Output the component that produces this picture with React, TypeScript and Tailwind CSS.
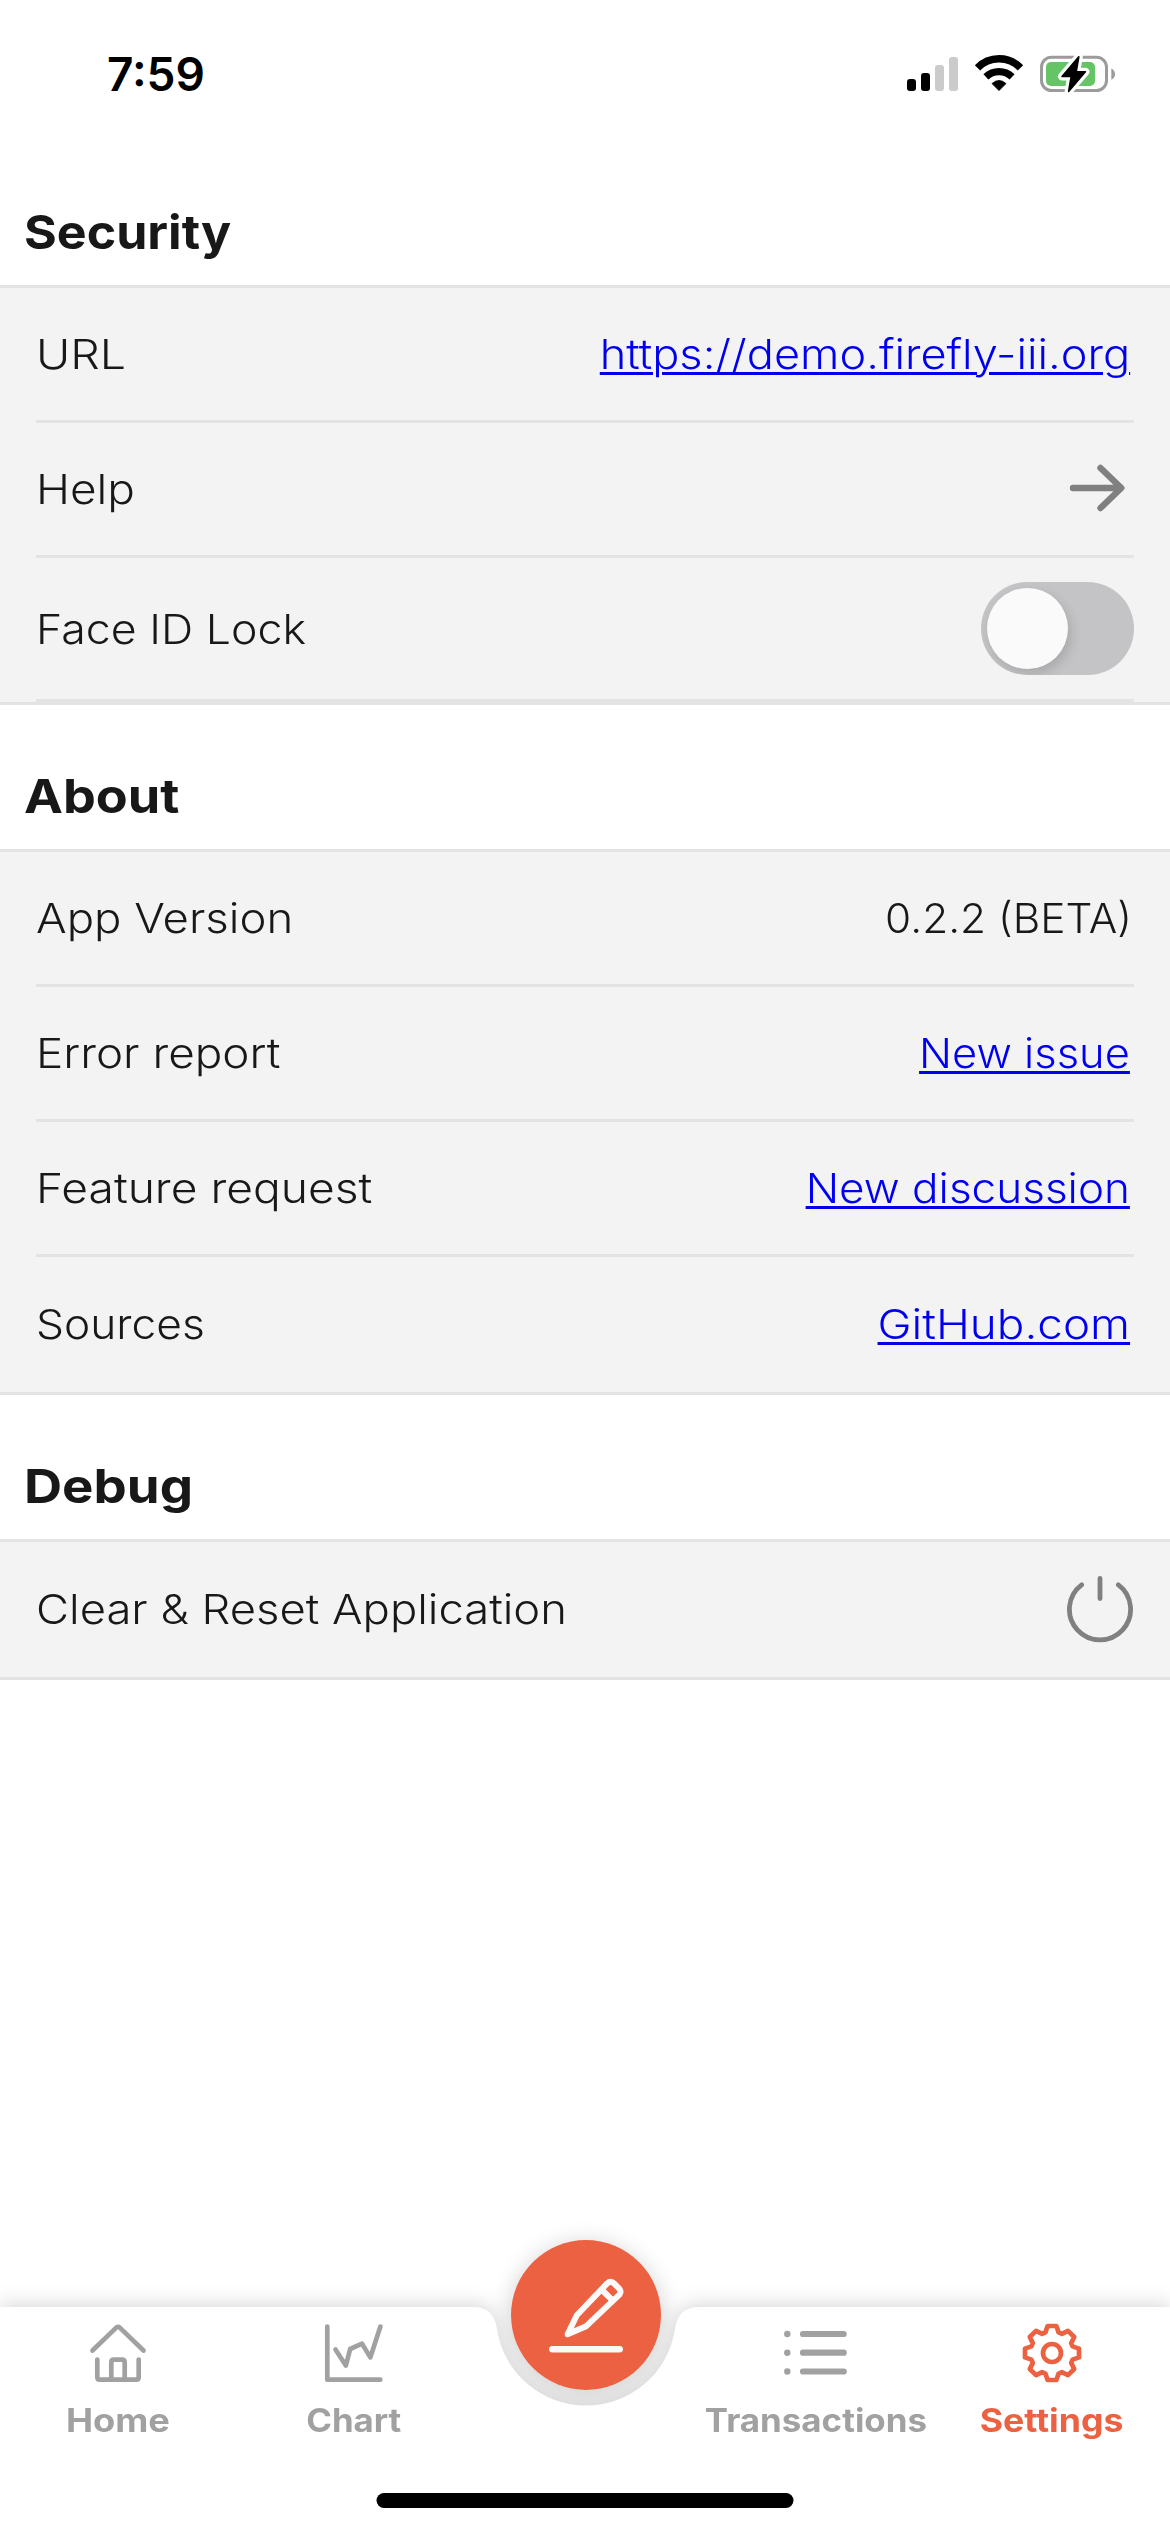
import type { ReactNode } from 'react';

function SignalIcon() {
  return (
    <svg width="51" height="60" viewBox="0 -1 51 60" aria-hidden="true">
      <rect x="0" y="34" width="9" height="12" rx="3" fill="#000" />
      <rect x="14" y="28" width="9" height="18" rx="3" fill="#000" />
      <rect x="28" y="20" width="9" height="26" rx="3" fill="#cbcbcb" />
      <rect x="42" y="12" width="9" height="34" rx="3" fill="#cbcbcb" />
    </svg>
  );
}

function WifiIcon() {
  return (
    <svg width="50" height="60" viewBox="0 -1 50 60" aria-hidden="true">
      <path d="M3.5 22.9A30 30 0 0 1 46.5 22.9" fill="none" stroke="#000" strokeWidth="7.4" />
      <path d="M11.9 31.8A19 19 0 0 1 38.1 31.8" fill="none" stroke="#000" strokeWidth="7.2" />
      <path d="M18 38.6Q25 32.2 32 38.6L25 45.6Z" fill="#000" stroke="#000" strokeWidth="0.8" strokeLinejoin="round" />
    </svg>
  );
}

function BatteryIcon() {
  const bolt = 'M38.8 11.8L22 31.4H31.2L28.6 46.4L45.4 26.8H36.2Z';
  return (
    <svg width="76" height="60" viewBox="0 -1 76 60" aria-hidden="true">
      <rect x="1.5" y="12.2" width="65" height="33.3" rx="10" fill="none" stroke="#9b9b9b" strokeWidth="3" />
      <path d="M71.3 23.5Q75 25.5 75 29.2Q75 32.8 71.3 34.8Z" fill="#9b9b9b" />
      <rect x="6" y="17" width="49" height="24" rx="5" fill="#65c466" />
      <path d={bolt} fill="#fff" stroke="#fff" strokeWidth="8" strokeLinejoin="round" />
      <path d={bolt} fill="#000" stroke="#000" strokeWidth="1.6" strokeLinejoin="round" />
    </svg>
  );
}

function ArrowIcon() {
  return (
    <svg width="68" height="60" viewBox="0 1 68 60" fill="none" stroke="#808080" strokeWidth="6.4" strokeLinecap="round" strokeLinejoin="round" aria-hidden="true">
      <path d="M7 30H55M34.5 10L55.3 30L34.5 50" />
    </svg>
  );
}

function PowerIcon() {
  return (
    <svg width="68" height="68" viewBox="0 0 68 68" fill="none" stroke="#808080" strokeWidth="4.8" strokeLinecap="round" aria-hidden="true">
      <path d="M15.6 9.8A30.6 30.6 0 1 0 52.4 9.8" />
      <path d="M34 3.5V23.5" />
    </svg>
  );
}

function HomeIcon() {
  return (
    <svg width="60" height="60" viewBox="88 2323 60 60" fill="none" stroke="#a1a1a1" strokeWidth="4.7" strokeLinecap="round" strokeLinejoin="round" aria-hidden="true">
      <path d="M92.5 2350.5L116.5 2327.4Q118 2326.2 119.5 2327.4L143.5 2350.5" />
      <path d="M97.3 2359.5V2377.2Q97.3 2379.7 99.8 2379.7H136.2Q138.7 2379.7 138.7 2377.2V2359.5" />
      <path d="M111.3 2379.7V2362.4Q111.3 2359.7 114 2359.7H122Q124.7 2359.7 124.7 2362.4V2379.7" />
    </svg>
  );
}

function ChartIcon() {
  return (
    <svg width="60" height="60" viewBox="324 2323 60 60" fill="none" stroke="#a1a1a1" strokeWidth="4.7" strokeLinecap="round" strokeLinejoin="round" aria-hidden="true">
      <path d="M327.3 2326.5V2379.7H380.3" />
      <path d="M335.5 2349.5L345.8 2365.6L350.2 2349L362 2343.6L370.3 2357.4L380.4 2326.6" />
    </svg>
  );
}

function ListIcon() {
  return (
    <svg width="72" height="60" viewBox="780 2323 72 60" fill="#a1a1a1" stroke="#a1a1a1" strokeLinecap="round" aria-hidden="true">
      <path d="M803 2334H843.7M803 2352.7H843.7M803 2371.5H843.7" strokeWidth="6.2" />
      <circle cx="787.3" cy="2334" r="3.2" stroke="none" />
      <circle cx="787.3" cy="2352.7" r="3.2" stroke="none" />
      <circle cx="787.3" cy="2371.5" r="3.2" stroke="none" />
    </svg>
  );
}

const gearTooth = [[-6.6, -20.6], [-4.4, -27], [4.4, -27], [6.6, -20.6]];
const gearPoints = Array.from({ length: 8 }, (_, i) => {
  const a = (i * Math.PI) / 4;
  return gearTooth
    .map(([x, y]) => `${(x * Math.cos(a) - y * Math.sin(a)).toFixed(2)},${(x * Math.sin(a) + y * Math.cos(a)).toFixed(2)}`)
    .join(' ');
}).join(' ');

function GearIcon() {
  return (
    <svg width="60" height="60" viewBox="-30 -30 60 60" fill="none" stroke="#eb6141" strokeWidth="4.7" strokeLinejoin="round" aria-hidden="true">
      <polygon points={gearPoints} />
      <circle cx="0" cy="0" r="9" />
    </svg>
  );
}

function PencilIcon() {
  return (
    <svg width="150" height="150" viewBox="71 40 150 150" fill="none" stroke="#fafafa" strokeWidth="6" strokeLinecap="round" strokeLinejoin="round" aria-hidden="true">
      <path d="M127.6 134.2L136.8 115.2L167.2 83.4Q170.4 80.4 173.8 83.2L179.4 88.8Q181.6 91.8 179.4 94.6L146.2 126.2Z" />
      <path d="M163 91L172 99.8" />
      <path d="M112.4 149.3H179.6" strokeWidth="6.6" />
    </svg>
  );
}

function Section({ title, children, stretch }: { title: string; children: ReactNode; stretch: string }) {
  return (
    <section>
      <h2 className="flex h-[144px] items-end pb-[23px] pl-[24px] text-[47px] leading-[60px] font-bold text-[#181818]">
        <span className={`origin-left ${stretch}`}>{title}</span>
      </h2>
      <div className="border-y-[3px] border-[#e3e3e4] bg-[#f3f3f3] px-[36px]">{children}</div>
    </section>
  );
}

function Row({
  label,
  stretch,
  size = 'h-[135px]',
  divider = true,
  children,
}: {
  label: string;
  stretch: string;
  size?: string;
  divider?: boolean;
  children: ReactNode;
}) {
  return (
    <div className={`flex items-center justify-between ${size} ${divider ? 'border-b-[3px] border-[#e3e3e4]' : 'pb-[2px]'}`}>
      <span className={`origin-left whitespace-nowrap ${stretch}`}>{label}</span>
      {children}
    </div>
  );
}

function TextLink({ children, stretch }: { children: string; stretch: string }) {
  return (
    <a className={`mr-[4px] origin-right whitespace-nowrap text-[#0000ee] underline decoration-[3px] underline-offset-[3px] ${stretch}`}>
      {children}
    </a>
  );
}

function Tab({ label, icon, stretch, active = false }: { label: string; icon: ReactNode; stretch: string; active?: boolean }) {
  return (
    <div className="flex w-[236px] flex-col items-center pt-[16px]">
      {icon}
      <span className={`mt-[18px] text-[32px] leading-[40px] font-bold ${stretch} ${active ? 'text-[#eb6141]' : 'text-[#a1a1a1]'}`}>
        {label}
      </span>
    </div>
  );
}

export default function App() {
  return (
    <div className="flex h-[2532px] w-[1170px] flex-col overflow-hidden bg-white font-['Inter',sans-serif] text-[41px] leading-[60px] font-light text-[#181818]">
      <header className="flex h-[141px] shrink-0 items-start justify-between pt-[44px] pr-[54px] pl-[107px]">
        <span className="text-[46px] font-semibold text-black">7:59</span>
        <div className="flex gap-[16px]">
          <SignalIcon />
          <WifiIcon />
          <BatteryIcon />
        </div>
      </header>

      <main className="flex-1">
        <Section title="Security" stretch="scale-x-[1.066]">
          <Row label="URL" stretch="scale-x-[1.136]">
            <TextLink stretch="scale-x-[1.1]">https://demo.firefly-iii.org</TextLink>
          </Row>
          <Row label="Help" stretch="scale-x-[1.12]">
            <ArrowIcon />
          </Row>
          <Row label="Face ID Lock" stretch="scale-x-[1.09]" size="h-[144px]">
            <div className="h-[93px] w-[153px] overflow-hidden rounded-full bg-[#c4c4c6] p-[6px]">
              <div className="size-[81px] rounded-full bg-[#fafafa] shadow-[3px_5px_12px_rgba(0,0,0,0.14)]" />
            </div>
          </Row>
        </Section>

        <Section title="About" stretch="scale-x-[1.11]">
          <Row label="App Version" stretch="scale-x-[1.11]">
            <span className="mr-[2px] origin-right scale-x-[1.033]">0.2.2 (BETA)</span>
          </Row>
          <Row label="Error report" stretch="scale-x-[1.118]">
            <TextLink stretch="scale-x-[1.06]">New issue</TextLink>
          </Row>
          <Row label="Feature request" stretch="scale-x-[1.126]">
            <TextLink stretch="scale-x-[1.074]">New discussion</TextLink>
          </Row>
          <Row label="Sources" stretch="scale-x-[1.08]" divider={false}>
            <TextLink stretch="scale-x-[1.117]">GitHub.com</TextLink>
          </Row>
        </Section>

        <Section title="Debug" stretch="scale-x-[1.123]">
          <Row label="Clear &amp; Reset Application" stretch="scale-x-[1.107]" divider={false}>
            <PowerIcon />
          </Row>
        </Section>
      </main>

      <nav className="relative h-[225px] shrink-0">
        <div className="absolute top-[-67px] left-[511px] size-[150px] rounded-full shadow-[0_4px_24px_rgba(0,0,0,0.2)]" />
        <svg
          className="absolute top-0 left-0 overflow-visible drop-shadow-[0_-2px_10px_rgba(0,0,0,0.17)]"
          width="1170"
          height="225"
          viewBox="0 0 1170 225"
          aria-hidden="true"
        >
          <path d="M0 0H473Q494 0 497 22A90 90 0 0 0 675 22Q678 0 699 0H1170V225H0Z" fill="#fff" />
        </svg>
        <div className="relative flex">
          <Tab label="Home" stretch="scale-x-[1.133]" icon={<HomeIcon />} />
          <Tab label="Chart" stretch="scale-x-[1.087]" icon={<ChartIcon />} />
          <div className="flex w-[226px] justify-center pl-[2px]">
            <button className="-mt-[67px] size-[150px] rounded-full bg-[#eb6141]">
              <PencilIcon />
            </button>
          </div>
          <Tab label="Transactions" stretch="scale-x-[1.09]" icon={<ListIcon />} />
          <Tab label="Settings" stretch="scale-x-[1.114]" active icon={<GearIcon />} />
        </div>
        <div className="absolute top-[186px] left-1/2 h-[15px] w-[417px] -translate-x-1/2 rounded-full bg-black" />
      </nav>
    </div>
  );
}
